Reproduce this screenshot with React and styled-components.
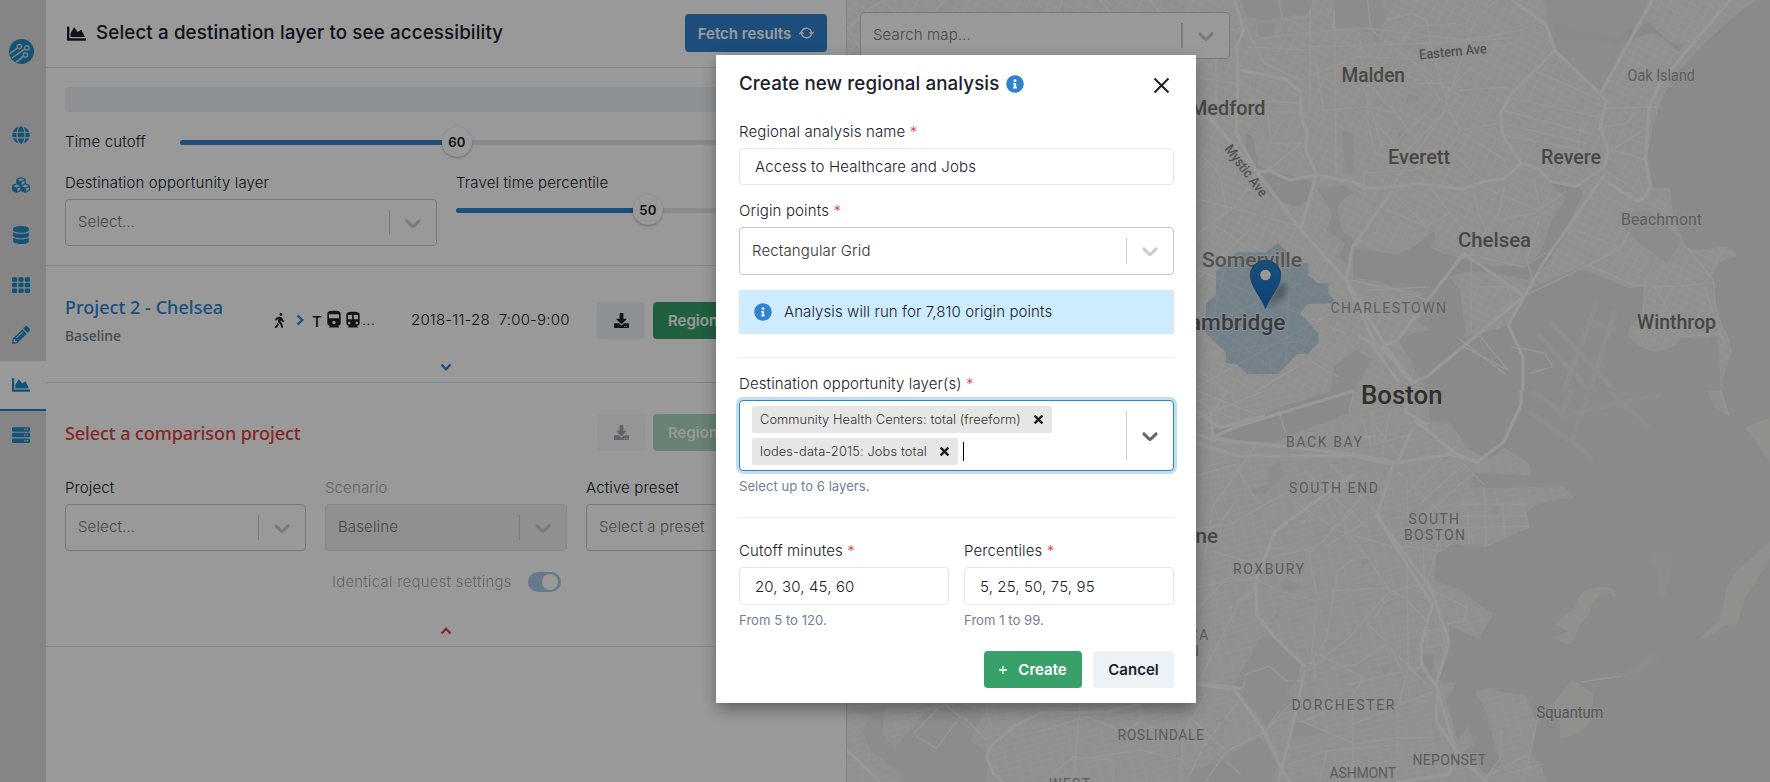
import React from "react";
import styled, { createGlobalStyle, css } from "styled-components";
import {
  FaChartArea, FaGlobe, FaCubes, FaDatabase, FaTh, FaPencilAlt, FaServer,
  FaDownload, FaWalking, FaInfoCircle, FaTimes,
} from "react-icons/fa";
import { MdDirectionsRailway, MdDirectionsSubway } from "react-icons/md";

const Global = createGlobalStyle`
  *, *::before, *::after { box-sizing: border-box; }
  body {
    margin: 0; overflow: hidden; background: #fff; color: #1a202c;
    font-family: Inter, "Liberation Sans", sans-serif; font-size: 15px; line-height: 22px;
    font-weight: 330; letter-spacing: 0.13px;
  }
  svg { display: block; flex: none; }
`;

const Page = styled.div`
  display: flex;
  width: 1770px;
  height: 782px;
  position: relative;
  overflow: hidden;
`;

/* ---------- sidebar ---------- */
const Sidebar = styled.nav`
  flex: none;
  width: 46px;
  background: #dedede;
  display: flex;
  flex-direction: column;
  color: #2389c9;
`;
const LogoBox = styled.div`
  height: 111px;
  padding: 39px 0 0 9px;
`;
const NavItem = styled.div`
  height: 50px;
  padding: 0 4px 1px 0;
  display: flex;
  align-items: center;
  justify-content: center;
  font-size: 18px;
  border-bottom: 2px solid ${(p) => (p.$active ? "#2389c9" : "transparent")};
  background: ${(p) => (p.$active ? "#fff" : "none")};
`;

/* ---------- analysis panel ---------- */
const Panel = styled.main`
  flex: none;
  width: 801px;
  background: #fff;
  border-right: 1px solid #d4d4d4;
`;
const PanelHeader = styled.header`
  height: 68px;
  padding: 0 19px 1px 21px;
  display: flex;
  align-items: center;
  border-bottom: 1px solid #e2e2e2;
`;
const PanelTitle = styled.h1`
  flex: 1;
  margin: 0 0 0 10px;
  font-size: 18.75px;
  font-weight: 500;
  letter-spacing: 0.13px;
`;
const Button = styled.button`
  height: 37px;
  border: 0;
  border-radius: 4px;
  padding: 0 ${(p) => (p.$w ? 0 : 15)}px;
  display: inline-flex;
  align-items: center;
  justify-content: center;
  gap: ${(p) => p.$gap || "8px"};
  font: 600 15px Inter, sans-serif;
  white-space: nowrap;
  flex: none;
  width: ${(p) => p.$w || "auto"};
  opacity: ${(p) => (p.$disabled ? 0.4 : 1)};
  ${(p) => ({
    blue: css`background: #3182ce; color: #fff; height: 38px;`,
    green: css`background: #38a169; color: #fff;`,
    gray: css`background: #edf2f7; color: #1a202c;`,
  })[p.$tone]}
`;
const RegionButton = styled(Button)`
  margin-left: 8px;
`;
const Settings = styled.section`
  height: 198px;
  padding: 19px 19px 0;
  border-bottom: 1px solid #e2e2e2;
`;
const Placeholder = styled.div`
  height: 25px;
  border-radius: 3px;
  background: #edf2f7;
`;
const SliderRow = styled.div`
  display: flex;
  align-items: center;
  height: 30px;
  margin-top: ${(p) => p.$top}px;
`;
const SliderLabel = styled.span`
  width: 115px;
`;
const Track = styled.div`
  flex: 1;
  height: 5px;
  border-radius: 3px;
  background: #e2e8f0;
  display: flex;
  align-items: center;
`;
const Fill = styled.div`
  width: ${(p) => p.$w}px;
  height: 5px;
  border-radius: 3px 0 0 3px;
  background: #3182ce;
`;
const Thumb = styled.div`
  width: 30px;
  height: 30px;
  border-radius: 50%;
  background: #fff;
  box-shadow: 0 1px 3px rgba(0, 0, 0, 0.2), 0 1px 2px rgba(0, 0, 0, 0.1);
  display: flex;
  align-items: center;
  justify-content: center;
  padding-bottom: 1px;
  font-size: 13.1px;
  font-weight: 600;
  letter-spacing: 0.3px;
`;
const Columns = styled.div`
  display: flex;
  gap: ${(p) => p.$gap};
  margin-top: ${(p) => p.$top || "0"};
`;
const Field = styled.div`
  width: ${(p) => p.$w || "auto"};
  flex: ${(p) => (p.$w ? "none" : 1)};
  min-width: 0;
`;
const Label = styled.label`
  display: block;
  height: 22px;
  line-height: 28px;
  margin-bottom: 8px;
  white-space: nowrap;
  color: ${(p) => p.$color || "inherit"};
`;
const PanelLabel = styled(Label)`
  margin-bottom: 5px;
  line-height: 22px;
`;
const SelectBox = styled.div`
  height: ${(p) => p.$h || 47}px;
  border: 1px solid ${(p) => (p.$disabled ? "#e0e0e0" : "#c8c8c8")};
  border-radius: 4px;
  background: ${(p) => (p.$disabled ? "#f0f0f0" : "#fff")};
  display: flex;
  align-items: center;
  padding-left: 12px;
  color: ${(p) => p.$color || "#767676"};
  ${(p) => p.$focus && css`
    border: 1px solid #2389c9;
    box-shadow: 0 0 0 3px rgba(35, 137, 201, 0.28);
  `}
`;
const SelectValue = styled.div`
  flex: 1;
  min-width: 0;
  white-space: nowrap;
  padding-bottom: ${(p) => p.$lift || 0}px;
`;
const Separator = styled.span`
  align-self: stretch;
  width: ${(p) => p.$thick || 1}px;
  margin: 10px 0;
  background: #ccc;
`;
const Indicator = styled.span`
  width: 46px;
  display: flex;
  justify-content: center;
  color: ${(p) => p.$color || "#ccc"};
`;
const Project = styled.section`
  height: ${(p) => p.$h}px;
  padding: ${(p) => p.$pad};
  border-bottom: 1px solid ${(p) => p.$line};
  display: flex;
  flex-direction: column;
`;
const ProjectRow = styled.div`
  display: flex;
  align-items: center;
  height: 38px;
`;
const Names = styled.div`
  width: ${(p) => p.$w}px;
  flex: none;
  padding-top: 2px;
`;
const ProjectTitle = styled.h2`
  margin: 0;
  font: 500 18px/24px "Noto Sans", "Open Sans", sans-serif;
  letter-spacing: ${(p) => p.$track || "0"};
  color: ${(p) => p.$color};
  white-space: nowrap;
`;
const Scenario = styled.div`
  margin-top: 6px;
  font: 500 13.9px/22px "Noto Sans", "Open Sans", sans-serif;
  letter-spacing: 0;
  color: #718096;
`;
const Modes = styled.div`
  display: flex;
  align-items: center;
  width: 139px;
  height: 22px;
  font-size: 15px;
`;
const ModeIcon = styled.span`
  font-size: ${(p) => p.$s}px;
  margin-right: ${(p) => p.$r}px;
  color: ${(p) => p.$color || "inherit"};
`;
const TMark = styled.span`
  width: 12px;
  font-size: 15px;
  font-weight: 500;
  padding-top: 3px;
`;
const When = styled.div`
  width: 186px;
  white-space: pre;
  letter-spacing: 0.2px;
`;
const Toggle = styled.div`
  margin: auto auto 0;
  color: ${(p) => p.$color};
`;
const Identical = styled.div`
  display: flex;
  align-items: center;
  margin: 20px 0 0 267px;
  letter-spacing: 0.22px;
  gap: 16px;
  height: 22px;
  opacity: 0.4;
`;
const Switch = styled.span`
  width: 33px;
  height: 20px;
  border-radius: 10px;
  background: #3182ce;
  padding: 2px 3px;
  display: flex;
  justify-content: flex-end;
  &::after {
    content: "";
    width: 16px;
    height: 16px;
    border-radius: 50%;
    background: #fff;
  }
`;

/* ---------- map ---------- */
const MapPane = styled.aside`
  position: relative;
  flex: 1;
  background: #f3f2ef;
  padding: 12px 0 0 13px;
`;
const MapSvg = styled.svg`
  position: absolute;
  inset: 0;
`;
const MapSearch = styled(SelectBox)`
  position: relative;
  width: 370px;
`;
const MapText = styled.text`
  font-family: Roboto, "Noto Sans", sans-serif;
  font-size: ${(p) => p.$s}px;
  font-weight: ${(p) => p.$w || 500};
  fill: ${(p) => p.$c || "#777"};
  letter-spacing: 0;
  stroke: #f3f3f1;
  stroke-width: 2px;
  stroke-opacity: 0.7;
  paint-order: stroke;
`;

/* ---------- dialog ---------- */
const Overlay = styled.div`
  position: absolute;
  inset: 0;
  background: rgba(0, 0, 0, 0.4);
  display: flex;
  align-items: flex-start;
  justify-content: center;
  padding: 55px 0 0 142px;
`;
const Dialog = styled.div`
  width: 480px;
  height: 648px;
  background: #fff;
  padding: 0 22px 0 23px;
  display: flex;
  flex-direction: column;
  box-shadow: 0 10px 15px -3px rgba(0, 0, 0, 0.2), 0 4px 14px rgba(0, 0, 0, 0.2);
`;
const DialogHead = styled.div`
  height: 63px;
  padding: 16px 4px 0 0;
  display: flex;
  align-items: flex-start;
`;
const DialogTitle = styled.h2`
  margin: 0 7px 0 0;
  font-size: 18.75px;
  line-height: 25px;
  font-weight: 500;
  letter-spacing: 0.1px;
`;
const InfoIcon = styled(FaInfoCircle)`
  color: #3182ce;
  font-size: 18px;
  margin-top: ${(p) => p.$top || 0}px;
`;
const CloseIcon = styled.svg`
  margin: 6px 0 0 auto;
`;
const Star = styled.span`
  color: #e53e3e;
`;
const Input = styled.div`
  height: ${(p) => p.$h || 37}px;
  border: 1px solid #e2e8f0;
  border-radius: 4px;
  padding: 0 15px;
  line-height: ${(p) => (p.$h || 37) - 1}px;
`;
const Notice = styled.div`
  height: 44px;
  margin-top: 15px;
  background: #ceecff;
  display: flex;
  align-items: center;
  padding-left: 15px;
  gap: 12px;
  letter-spacing: 0.09px;
`;
const Rule = styled.div`
  height: 1px;
  flex: none;
  background: #edeeef;
  margin-top: ${(p) => p.$top}px;
`;
const Group = styled.div`
  margin-top: ${(p) => p.$top}px;
`;
const Chips = styled.div`
  display: flex;
  flex-direction: column;
  gap: 5px;
`;
const ChipLine = styled.div`
  display: flex;
  align-items: center;
  gap: 5px;
`;
const Chip = styled.span`
  height: 27px;
  display: flex;
  align-items: center;
  gap: 13px;
  padding: 0 9px 0 8px;
  border-radius: 2px;
  background: #e6e6e6;
  color: #333;
  font-size: 12.8px;
  letter-spacing: ${(p) => p.$track}px;
`;
const ChipX = styled(FaTimes)`
  color: #1a202c;
  font-size: 13px;
  width: 9px;
`;
const Caret = styled.span`
  width: 1px;
  height: 19px;
  background: #000;
`;
const Helper = styled.div`
  margin-top: 7px;
  height: 16px;
  font-size: 13.1px;
  font-weight: 400;
  letter-spacing: 0.03px;
  line-height: 16px;
  color: #718096;
`;
const Footer = styled.div`
  display: flex;
  justify-content: flex-end;
  gap: 11px;
  margin-top: 23px;
`;

function Chevron() {
  return (
    <svg width="26" height="26" viewBox="0 0 20 20" fill="currentColor">
      <path d="M4.516 7.548c0.436-0.446 1.043-0.481 1.576 0l3.908 3.747 3.908-3.747c0.533-0.481 1.141-0.446 1.574 0 0.436 0.445 0.408 1.197 0 1.615-0.406 0.418-4.695 4.502-4.695 4.502-0.217 0.223-0.502 0.335-0.787 0.335s-0.57-0.112-0.789-0.335c0 0-4.287-4.084-4.695-4.502s-0.436-1.17 0-1.615z" />
    </svg>
  );
}

function SmallChevron({ turn = 0 }) {
  return (
    <svg width="12" height="12" viewBox="0 0 12 12" fill="none" stroke="currentColor" strokeWidth="2.2">
      <path d="M1.5 3.5 6 8.3 10.5 3.5" transform={`rotate(${turn} 6 6)`} />
    </svg>
  );
}

function SyncIcon() {
  return (
    <svg width="15" height="14" viewBox="0 0 15 14" fill="none" stroke="#fff" strokeWidth="1.4">
      <path d="M2.7 5.3A5.200 5.200 0 0 1 12.600 7.200M12.300 8.700A5.200 5.200 0 0 1 2.400 6.800" />
      <path d="M10.400 6.200 12.600 8.300 14.600 6M.4 8 2.400 5.700 4.600 7.800" strokeWidth="1.300" />
    </svg>
  );
}

function Select({ children, h, disabled, color, chevron, focus }) {
  return (
    <SelectBox $h={h} $disabled={disabled} $color={color} $focus={focus}>
      <SelectValue $lift={h ? 0 : 1}>{children}</SelectValue>
      <Separator />
      <Indicator $color={chevron}><Chevron /></Indicator>
    </SelectBox>
  );
}

function Logo() {
  return (
    <svg width="25" height="25" viewBox="0 0 25 25">
      <circle cx="12.5" cy="12.5" r="12.5" fill="#2389c9" />
      <g fill="none" stroke="#dedede" strokeWidth="1.2">
        <path d="M1 14.5 8.3 9.3M3 19 15.6 10.2M7.3 23.2 14.3 17.4" strokeWidth="1.5" />
        <circle cx="10.3" cy="7.6" r="2.2" />
        <circle cx="17.9" cy="8.8" r="2.2" />
        <circle cx="16.4" cy="16" r="2.2" />
      </g>
    </svg>
  );
}

/* Streets and shores, north half of the map. */
const northWater = [
  "M1530 0Q1490 30 1450 70Q1360 160 1310 230Q1280 280 1265 330Q1240 420 1233 500Q1238 540 1250 562L1300 565 1305 640Q1320 700 1345 745Q1370 752 1400 745Q1430 740 1450 740Q1480 755 1475 770Q1440 780 1430 790L1410 830Q1410 870 1420 900L1440 980Q1465 1020 1465 1060L1450 1100 1435 1175 1568 1175 1568 0Z",
  "M440 745Q500 752 560 765Q600 745 630 720Q650 690 660 695Q670 715 650 740Q680 765 720 770L820 800 900 795Q935 780 950 750L985 640Q1015 610 1010 590L970 545Q990 550 1020 560 1050 560 1060 570 1065 590 1050 610L1000 730 960 800 920 840 850 825 760 812 700 830 730 870 745 1000 690 1075 640 1175 600 1090 560 1010 650 990 610 960 655 930 600 900 640 880 560 865 500 840 440 835Z",
  "M930 860 1050 805Q1110 830 1190 865L1228 860 1225 950Q1180 970 1185 1010Q1220 1050 1260 1055Q1310 1050 1330 1012Q1380 1020 1425 1010L1430 1060 1435 1175 640 1175 720 1020 850 980 880 930Z",
  "M150 400Q180 410 175 440L185 500 250 520 330 545 315 600Q290 625 270 615 240 605 215 590L190 530 150 460Z",
  "M340 560Q380 570 420 555L440 580Q390 610 400 640L410 690Q450 720 450 750L430 800 400 770 420 730 370 690 385 640Z",
  "M380 1175 390 1100Q430 1060 450 1050L490 1080 440 1175Z",
  "M980 70Q1010 60 1030 90 1090 80 1150 110 1180 90 1240 65 1260 90 1290 120 1310 135 1340 130L1320 155Q1280 110 1250 100 1200 110 1150 150 1130 120 1060 120 1020 130 990 110Z",
];
const northParks = [
  "M960 0 1240 0 1110 275 1000 170 970 80Z",
  "M140 0 330 0 320 40 200 60 150 50Z",
  "M390 0 520 0 530 60 500 100 390 80Z",
  "M180 70 230 70 225 110 190 115Z",
  "M410 390 440 400 440 520 420 520Z",
  "M1170 640 1240 630 1330 720 1290 790 1230 740 1180 700Z",
  "M500 80 515 90 510 130 495 120ZM560 400 580 390 590 405 570 415ZM590 285 620 290 610 310 585 305Z",
];
const northMajor = [
  "M120 0 145 90 125 140 130 215 125 400 180 515 300 690 425 845 530 1040 600 1145",
  "M140 212 260 238 298 275 300 350 318 400 312 450 342 520 300 690",
  "M50 350 180 515 215 512 270 540 340 525 440 545 470 565 560 560 620 550 740 568 790 545 850 535 895 490 845 405 840 340 870 280 970 170 985 150 965 80 930 45 870 0",
  "M895 490 940 505 975 545 1045 558 1120 500 1130 450 1110 380 1125 300 990 155",
  "M1250 0 1110 280",
  "M1120 525 960 780 860 975 900 1070 900 1175",
  "M900 890 640 1130 600 1150 520 1040",
  "M1120 540 1210 605 1230 590 1245 560 1232 480 1240 330 1270 250 1360 130 1460 0",
  "M545 575 440 740 422 840",
  "M425 850 500 1030 560 1090",
  "M900 885 740 760 560 1020 520 1040",
  "M460 1010 490 1030 560 1140",
];
const northMinor = [
  "M325 30 325 340M390 30 395 520M330 95 480 85 740 120 900 90M330 140 640 130 870 115",
  "M480 0 490 90 560 150 730 290M830 0 770 60 680 350 545 560M640 60 650 130 700 330",
  "M300 240 450 170 650 180 720 160 900 125M400 180 480 250 550 330 620 430M460 120 470 260 520 440",
  "M730 270 860 262M610 200 700 330 730 390 840 370M730 390 680 480 600 510 470 520 470 560",
  "M850 290 1100 350 1110 330M845 330 1080 400M845 370 1070 430M850 405 1060 450M930 210 1110 300",
  "M1125 325 1275 320M1060 350 1050 440M1240 380 1140 450 1235 480M1225 590 1100 490M1120 380 1180 370 1210 330",
  "M740 400 850 480M760 400 720 470 790 540M640 550 740 690M560 590 640 680 700 640M530 630 640 680",
  "M770 580 780 640 800 690 760 760 760 990M790 560 960 640M850 560 830 660 930 640 1015 575M930 540 950 640 910 780 930 850",
  "M740 760 900 800 960 760M1040 690 1160 740 1090 790M1210 650 1160 750 900 890M1075 795 1200 855 1310 860 1415 850",
  "M1230 840 1225 940 1330 1010 1430 1000M1250 850 1330 1000M1345 745 1415 840 1420 920M1390 860 1440 1020",
  "M0 430 80 520 100 640M0 540 80 450M0 590 300 680M50 660 200 780M0 720 120 620 160 560M200 520 300 430 220 430",
  "M0 80 120 90M0 160 120 150M0 230 120 250M20 40 20 350M70 80 70 380M160 230 170 330 320 340",
  "M0 800 420 1000M0 860 160 690M100 780 60 960M0 1000 300 850M20 940 240 1120M100 900 300 1060M40 1060 320 1020M160 820 220 1110M270 780 260 1090",
  "M0 1173 380 940M0 1090 100 1173M180 1173 320 1080 400 1130M430 840 560 870 640 900M650 860 480 870",
  "M760 860 860 860 870 900 780 1000M770 990 860 1110 740 1040M720 1010 850 1120M870 1040 960 1060 980 1100 920 1120",
  "M150 80 200 190 300 240M190 115 320 100M150 140 320 150M240 0 250 60 320 50M530 60 600 40 640 60M560 150 600 80 740 70",
  "M140 300 300 310M210 340 220 430M340 180 360 330 480 320 560 340M480 250 480 340 560 440M540 250 720 250M500 200 620 240",
  "M550 430 650 330 760 200M580 460 720 300M600 490 640 450 700 460M480 360 500 460 560 480",
];
const runways = [
  "M1100 910 1010 1173M1150 930 1080 1173M970 960 1150 1173M940 1000 1080 1173M1070 960 1150 990",
];

/* Streets and shores, south half of the map. */
const southWater = [
  "M640 -2 650 90 700 95 760 180 810 205 850 170 915 215 925 255 770 245Q755 280 760 290L860 290 1010 285 1040 320Q970 325 930 345 905 360 915 380L915 410Q840 450 800 468L700 460Q665 480 665 510L660 570 720 590Q770 630 820 670L780 745Q740 720 700 705L705 770 670 870 718 875Q710 910 690 920L725 1050 750 1005 770 1060 740 1080 800 1150 840 1120 820 1050 800 960 770 900Q830 880 830 900L910 915 935 990 920 1085Q950 1110 965 1175L1568 1175 1568 -2Z",
  "M60 115Q160 95 240 50L390 -2 440 -2 430 65Q320 110 240 150 140 160 60 130Z",
  "M620 790 660 790 655 860Z",
];
const southParks = [
  "M120 880 190 740 230 730 300 820 290 870 260 900 290 930 210 1010 130 900Z",
  "M60 1120 190 1040 240 1120 220 1175 0 1175 0 1140Z",
  "M280 990 360 1010 345 1035 275 1035Z",
  "M240 580 260 565 300 585 270 605Z",
  "M210 230 245 210 250 260 190 320 160 300 210 280Z",
  "M460 510 480 500 490 510 465 525ZM370 745 400 755 385 770 372 760ZM515 830 540 820 545 835 525 850ZM78 990 90 978 100 992 88 1002ZM820 345 835 345 835 368 820 368ZM230 665 242 670 238 685 228 680Z",
];
const southIslands = [
  "M985 700 1040 650Q1050 605 1080 595 1100 585 1120 588 1145 590 1150 600L1150 620Q1130 600 1110 610 1080 640 1080 670L1055 700 1030 760Q1000 755 985 740L1020 720Z",
  "M1375 745 1430 690Q1445 640 1450 590 1470 540 1490 530L1568 450 1568 500Q1520 590 1500 620L1480 700Q1440 700 1430 715 1400 750 1375 745Z",
  "M1035 865 1090 910 1085 990 1060 1020 1000 1045 1000 1000 980 940Z",
  "M1395 0 1435 0 1455 75 1420 50Z",
  "M1500 110 1568 80 1568 210Z",
];
const southMajor = [
  "M0 125 60 145 200 160 440 190 560 215 700 190 780 210 850 150 895 40 895 0",
  "M0 150 130 195 440 195 550 220 505 375 620 580 655 640 625 760 625 820 670 890 665 990 720 1080 800 1173",
  "M600 115 560 215M60 110 60 140 130 105 440 0M20 60 80 110 200 75",
  "M505 375 650 590 700 750 665 880 720 1090 700 1150 560 1173",
  "M20 880 120 895 200 1020 250 1140 270 1173",
  "M310 840 280 990 240 1173M310 825 230 740 180 670 178 570 230 420 440 250",
  "M640 100 580 60 600 0M610 90 720 190 780 215",
];
const southMinor = [
  "M0 415 110 400 250 310 440 260M40 500 60 350 130 240 180 160M0 590 170 560 240 600 340 630",
  "M280 330 400 420 560 470M340 300 480 500 540 600 640 580M320 480 345 620 330 780 340 860M390 600 370 740 320 830",
  "M385 600 530 590 580 620 640 690M540 600 430 740 320 840M440 360 330 480 200 470M480 390 360 470",
  "M310 240 480 410M380 220 520 380M450 240 300 400M520 250 380 420M240 60 260 130M430 60 440 20M460 80 490 160",
  "M585 270 590 380 550 380M630 470 635 580M670 460 640 580M585 460 590 830 560 960 560 1120",
  "M730 340 900 340M730 375 910 375M720 410 910 405M795 290 800 465M845 340 850 430M900 335 915 410M750 350 755 460",
  "M560 240 730 420M590 300 700 180M620 340 740 220 795 280M640 370 760 250M700 460 680 480 580 465",
  "M0 680 100 560 180 570M20 880 130 640 180 590M145 890 150 850 215 825 260 870 300 870M330 780 470 860 430 930 310 990",
  "M380 830 450 820 530 760 640 880M430 880 620 830M440 1000 660 900M300 990 450 1060 560 1040 660 1040M270 1120 370 1080 570 1060",
  "M0 980 100 1080 40 1173M100 1080 200 1025 270 940 640 930M200 1025 240 960M370 1080 350 1173M440 940 440 1173",
  "M640 590 750 650 740 690 690 700M640 720 680 715 690 760 640 770 640 720M840 1020 840 1100 800 1160 920 1085 940 980M920 1090 900 1173M850 1150 950 1120",
  "M1060 872 1170 855M1435 0 1455 70M470 480 400 540 390 600M130 320 80 400 40 420M0 260 120 220 180 330",
  "M500 680 520 640 560 600M480 700 540 760 580 860M220 500 330 470M110 650 200 560M60 480 180 520",
  "M0 20 130 90M20 0 180 70M0 90 200 0M100 0 40 100M500 100 560 190M540 60 520 190M490 60 500 160 600 130M440 140 560 130",
];

/* West side of the map, above and below the dialog. */
const westRoads = [
  "M20 570 120 665M450 560 440 590 460 640 490 666M600 460 520 500 450 560M600 460 800 455 900 432",
  "M1080 370 1200 385",
];
const westMinor = [
  "M20 440 130 430M220 520 300 440M230 530 290 565 360 470 310 430M370 470 440 540M440 430 450 500",
  "M720 430 700 666M580 520 740 470 860 520 940 500M700 600 900 570 1030 600M620 660 700 590 820 600 820 666",
  "M1100 400 1030 520 1020 666M1200 420 1090 560 1040 666M1040 500 1200 640M900 440 905 480 860 510",
];

function Layer({ x, y, sx, sy, children }) {
  return <g transform={`translate(${x} ${y}) scale(${sx} ${sy})`}>{children}</g>;
}

function Paths({ list, ...rest }) {
  return <g {...rest}>{list.map((d) => <path key={d} d={d} vectorEffect="non-scaling-stroke" />)}</g>;
}

const road = { fill: "none", stroke: "#fefefe", strokeLinejoin: "round", strokeLinecap: "round" };

/* text, left, right, centre line, size, colour, weight */
const places = [
  ["Malden", 1341.5, 1405, 75, 20],
  ["Medford", 1190, 1265.5, 108, 20],
  ["Everett", 1388, 1450, 157, 20],
  ["Revere", 1541, 1601, 157, 20],
  ["Chelsea", 1458, 1531, 240, 20],
  ["Somerville", 1202, 1302, 260, 20, "#8a8a8a"],
  ["Cambridge", 1174, 1285.5, 322, 22, "#5c656b"],
  ["Boston", 1361, 1442.5, 395, 25, "#4f4f4f"],
  ["Winthrop", 1637, 1716, 322, 20],
  ["Brookline", 1131, 1218, 536, 20],
  ["Oak Island", 1627.5, 1695, 75, 16, "#9c9c9c", 400],
  ["Beachmont", 1621, 1702, 219, 16, "#9c9c9c", 400],
  ["Squantum", 1536.5, 1603.5, 712, 16, "#8e8e8e", 400],
  ["CHARLESTOWN", 1330.5, 1446, 308, 14, "#a0a0a0", 400],
  ["BACK BAY", 1286, 1362, 442, 14, "#999", 400],
  ["SOUTH END", 1289, 1378, 488, 14, "#999", 400],
  ["SOUTH", 1408.5, 1459, 519, 14, "#999", 400],
  ["BOSTON", 1404, 1465, 535.5, 14, "#999", 400],
  ["ROXBURY", 1233, 1304, 569, 14, "#999", 400],
  ["JAMAICA", 1138, 1208.5, 635, 14, "#999", 400],
  ["PLAIN", 1150, 1199, 651, 14, "#999", 400],
  ["DORCHESTER", 1291.5, 1394.5, 705, 14, "#999", 400],
  ["ROSLINDALE", 1117.5, 1204, 735, 14, "#999", 400],
  ["NEPONSET", 1412.5, 1486, 760, 14, "#999", 400],
  ["ASHMONT", 1329.5, 1396, 773.5, 14, "#999", 400],
  ["WEST", 1049, 1090, 784, 14, "#999", 400],
];

function MapCanvas() {
  const north = { x: 1190, y: 0, sx: 0.3699, sy: 0.33333 };
  const south = { x: 1190, y: 391, sx: 0.3699, sy: 0.33333 };
  const west = { x: 840, y: 560, sx: 0.33333, sy: 0.33333 };
  return (
    <MapSvg width="923" height="782" viewBox="847 0 923 782">
      <defs>
        <pattern id="blocks" width="9" height="7" patternUnits="userSpaceOnUse" patternTransform="rotate(28)">
          <path d="M0 .5H9M.5 0V7" fill="none" stroke="#f7f6f4" strokeWidth="1" />
        </pattern>
        <pattern id="blocks2" width="11" height="6" patternUnits="userSpaceOnUse" patternTransform="rotate(-14)">
          <path d="M0 .5H11M.5 0V6" fill="none" stroke="#f6f5f3" strokeWidth="1" />
        </pattern>
        <linearGradient id="pin" x1="0" y1="0" x2="0" y2="1">
          <stop offset="0" stopColor="#2e85cb" />
          <stop offset="1" stopColor="#126fc6" />
        </linearGradient>
        <filter id="soft" x="-50%" y="-50%" width="200%" height="200%"><feGaussianBlur stdDeviation="3" /></filter>
      </defs>
      <rect x="847" width="923" height="782" fill="#f1f0ed" />
      <rect x="847" width="923" height="391" fill="url(#blocks)" />
      <rect x="847" y="391" width="923" height="391" fill="url(#blocks2)" />
      <path d="M847 709 870 716 862 732 872 752 895 768 905 782H985L990 752 970 742 984 712 960 704 925 712 895 748 882 735 885 706Z" fill="#e9e9e9" />
      <Layer {...north}>
        <Paths list={northParks} fill="#eaeaea" />
        <Paths list={northWater} fill="#e6e6e6" />
        <Paths list={runways} fill="none" stroke="#ededed" strokeWidth="5" />
        <Paths list={northMinor} {...road} stroke="#fafafa" strokeWidth="1.5" />
        <Paths list={northMajor} {...road} strokeWidth="3.2" />
      </Layer>
      <Layer {...south}>
        <Paths list={southParks} fill="#eaeaea" />
        <Paths list={southWater} fill="#e6e6e6" />
        <Paths list={southIslands} fill="#f1f0ec" />
        <path d="M1237 500 1265 488 1305 487 1300 550 1285 615 1268 605 1262 530ZM1170 855 1240 788 1270 802 1210 850Z" fill="#eaeaea" />
        <path d="M915 60 1090 200M1000 75 1275 10M1130 0 1245 110M1080 0 1030 155M925 0 1000 60M1000 80 1030 0" fill="none" stroke="#ececec" strokeWidth="14" />
        <Paths list={southMinor} {...road} stroke="#fafafa" strokeWidth="1.5" />
        <Paths list={southMajor} {...road} strokeWidth="3.2" />
      </Layer>
      <Layer {...west}>
        <Paths list={westMinor} {...road} stroke="#fafafa" strokeWidth="1.5" />
        <Paths list={westRoads} {...road} strokeWidth="3.2" />
      </Layer>
      <g {...road} stroke="#fbfbfb" strokeWidth="1.5">
        <path d="M847 30 870 8 885 0M847 27 862 52M880 0 895 12M935 12 945 0M1058 12 1062 0M1100 0 1110 12M1150 0 1160 12" />
      </g>
      <Layer {...north}>
        <path
          d="M155 757 125 757 95 790 70 815 70 885 43 910 43 1000 97 1058 97 1088 130 1095 155 1122 238 1122 290 1062 318 1062 347 1030 347 1000 298 940 318 912 398 910 374 880 374 850 345 850 320 825 320 790 268 790 268 760 237 728 205 757Z"
          fill="rgba(35,140,205,.23)"
        />
      </Layer>
      {places.map(([name, left, right, mid, size, color, weight]) => (
        <MapText
          key={name + mid} x={left} y={mid + size * 0.355} $s={size} $c={color} $w={weight}
          textLength={right - left} lengthAdjust={weight && size === 14 ? "spacing" : "spacingAndGlyphs"}
        >
          {name}
        </MapText>
      ))}
      <MapText $s={14} $c="#888" transform="translate(1419.5 59.5) rotate(-5.5)" textLength="68" lengthAdjust="spacingAndGlyphs">Eastern Ave</MapText>
      <MapText $s={14} $c="#888" transform="translate(1224 149) rotate(53)" textLength="61" lengthAdjust="spacingAndGlyphs">Mystic Ave</MapText>
      <path d="M1266 309 1280 283 1288 287 1282 298Z" fill="#000" opacity=".35" filter="url(#soft)" />
      <path
        d="M1265.5 308.5C1262 298 1250.3 286 1250.3 275.300A15.200 15.200 0 0 1 1280.700 275.300C1280.700 286 1269 298 1265.5 308.5Z"
        fill="url(#pin)" stroke="#2a6ea5" strokeWidth="1"
      />
      <circle cx="1265.5" cy="275" r="5.800" fill="#fff" stroke="#2a6ea5" strokeWidth="1" />
    </MapSvg>
  );
}

const nav = [FaGlobe, FaCubes, FaDatabase, FaTh, FaPencilAlt, FaChartArea, FaServer];

function Required({ children }) {
  return <Label>{children} <Star>*</Star></Label>;
}

function CreateDialog() {
  return (
    <Overlay>
      <Dialog role="dialog">
        <DialogHead>
          <DialogTitle>Create new regional analysis</DialogTitle>
          <InfoIcon $top={4} />
          <CloseIcon width="17" height="17" viewBox="0 0 17 17" stroke="#1a202c" strokeWidth="2">
            <path d="M1.500 1.500 15.500 15.500M15.500 1.500 1.500 15.500" />
          </CloseIcon>
        </DialogHead>
        <Required>Regional analysis name</Required>
        <Input>Access to Healthcare and Jobs</Input>
        <Group $top={12}>
          <Required>Origin points</Required>
          <Select h={48} color="#333">Rectangular Grid</Select>
        </Group>
        <Notice><InfoIcon /> Analysis will run for 7,810 origin points</Notice>
        <Rule $top={23} />
        <Group $top={12}>
          <Required>Destination opportunity layer(s)</Required>
          <Select h={71} chevron="#666" focus>
            <Chips>
              <ChipLine><Chip $track={0.09}>Community Health Centers: total (freeform) <ChipX /></Chip></ChipLine>
              <ChipLine><Chip $track={0.16}>lodes-data-2015: Jobs total <ChipX /></Chip><Caret /></ChipLine>
            </Chips>
          </Select>
          <Helper>Select up to 6 layers.</Helper>
        </Group>
        <Rule $top={23} />
        <Columns $gap="15px" $top="19px">
          <Field>
            <Required>Cutoff minutes</Required>
            <Input $h={38}>20, 30, 45, 60</Input>
            <Helper>From 5 to 120.</Helper>
          </Field>
          <Field>
            <Required>Percentiles</Required>
            <Input $h={38}>5, 25, 50, 75, 95</Input>
            <Helper>From 1 to 99.</Helper>
          </Field>
        </Columns>
        <Footer>
          <Button $tone="green" $w="98px" $gap="11px">
            <svg width="8" height="8" viewBox="0 0 8 8" stroke="#fff" strokeWidth="1.3"><path d="M4 0V8M0 4H8" /></svg>
            Create
          </Button>
          <Button $tone="gray" $w="81px">Cancel</Button>
        </Footer>
      </Dialog>
    </Overlay>
  );
}

export default function App() {
  return (
    <Page>
      <Global />
      <Sidebar>
        <LogoBox><Logo /></LogoBox>
        {nav.map((Icon, i) => <NavItem key={i} $active={Icon === FaChartArea}><Icon /></NavItem>)}
      </Sidebar>
      <Panel>
        <PanelHeader>
          <FaChartArea size={19} />
          <PanelTitle>Select a destination layer to see accessibility</PanelTitle>
          <Button $tone="blue" $w="142px">Fetch results <SyncIcon /></Button>
        </PanelHeader>
        <Settings>
          <Placeholder />
          <SliderRow $top={15}>
            <SliderLabel>Time cutoff</SliderLabel>
            <Track><Fill $w={262} /><Thumb>60</Thumb></Track>
          </SliderRow>
          <Columns $gap="19px" $top="15px">
            <Field $w="372px">
              <PanelLabel>Destination opportunity layer</PanelLabel>
              <Select>Select...</Select>
            </Field>
            <Field>
              <PanelLabel>Travel time percentile</PanelLabel>
              <SliderRow $top={-4}><Track><Fill $w={177} /><Thumb>50</Thumb></Track></SliderRow>
            </Field>
          </Columns>
        </Settings>
        <Project $h={117} $pad="35px 19px 9px" $line="#bee3f8">
          <ProjectRow>
            <Names $w={207}>
              <ProjectTitle $color="#3182ce" $track="0.03px">Project 2 - Chelsea</ProjectTitle>
              <Scenario>Baseline</Scenario>
            </Names>
            <Modes>
              <ModeIcon $s={15} $r={7}><FaWalking /></ModeIcon>
              <ModeIcon $s={12} $r={6} $color="#3182ce"><SmallChevron turn={-90} /></ModeIcon>
              <TMark>T</TMark>
              <ModeIcon $s={20} $r={-1}><MdDirectionsRailway /></ModeIcon>
              <ModeIcon $s={20} $r={-1}><MdDirectionsSubway /></ModeIcon>
              ...
            </Modes>
            <When>2018-11-28  7:00-9:00</When>
            <Button $tone="gray" $w="48px"><FaDownload size={15} /></Button>
            <RegionButton $tone="green">Regional analysis</RegionButton>
          </ProjectRow>
          <Toggle $color="#3182ce"><SmallChevron /></Toggle>
        </Project>
        <Project $h={264} $pad="30px 19px 9px" $line="#fed7d7">
          <ProjectRow>
            <Names $w={532}><ProjectTitle $color="#e53e3e" $track="-0.08px">Select a comparison project</ProjectTitle></Names>
            <Button $tone="gray" $w="48px" $disabled><FaDownload size={15} /></Button>
            <RegionButton $tone="green" $disabled>Regional analysis</RegionButton>
          </ProjectRow>
          <Columns $gap="19px" $top="26px">
            <Field $w="241px"><PanelLabel>Project</PanelLabel><Select>Select...</Select></Field>
            <Field $w="242px">
              <PanelLabel $color="#a3a6ab">Scenario</PanelLabel>
              <Select disabled>Baseline</Select>
            </Field>
            <Field><PanelLabel>Active preset</PanelLabel><Select>Select a preset</Select></Field>
          </Columns>
          <Identical>Identical request settings <Switch /></Identical>
          <Toggle $color="#e53e3e"><SmallChevron turn={180} /></Toggle>
        </Project>
      </Panel>
      <MapPane>
        <MapCanvas />
        <MapSearch>
          <SelectValue $lift={1}>Search map...</SelectValue>
          <Separator $thick={2} />
          <Indicator><Chevron /></Indicator>
        </MapSearch>
      </MapPane>
      <CreateDialog />
    </Page>
  );
}
